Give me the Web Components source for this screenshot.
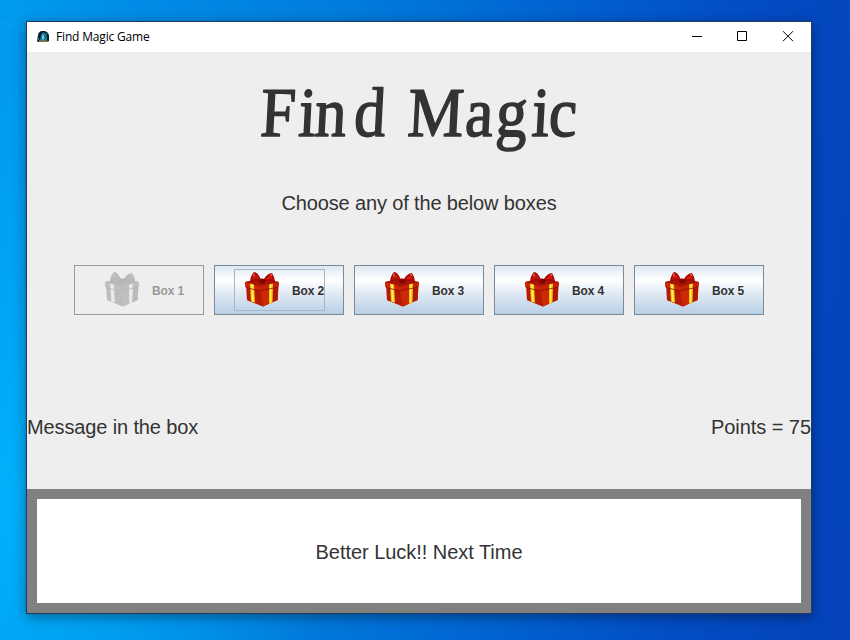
<!DOCTYPE html>
<html lang="en">
<head>
<meta charset="utf-8">
<title>Find Magic Game</title>
<style>
html,body{margin:0;width:850px;height:640px;overflow:hidden}
body{font-family:"Liberation Sans",Arial,sans-serif;color:#333}
</style>
</head>
<body>
<game-desktop>
  <game-window caption="Find Magic Game">
    <game-heading></game-heading>
    <game-label style="--gap:25px;--ls:-.14px">Choose any of the below boxes</game-label>
    <box-row>
      <gift-button disabled>Box 1</gift-button>
      <gift-button focused>Box 2</gift-button>
      <gift-button>Box 3</gift-button>
      <gift-button>Box 4</gift-button>
      <gift-button>Box 5</gift-button>
    </box-row>
    <status-row>
      <game-label style="--ls:-.13px">Message in the box</game-label>
      <game-label style="--ls:-.06px">Points = 75</game-label>
    </status-row>
    <message-panel><game-label style="--ls:-.04px">Better Luck!! Next Time</game-label></message-panel>
  </game-window>
</game-desktop>
<script>
const define = (name, html, setup) => customElements.define(name, class extends HTMLElement {
  constructor() {
    super();
    const t = document.createElement('template');
    t.innerHTML = html;
    this.attachShadow({mode: 'open'}).append(t.content.cloneNode(true));
  }
  connectedCallback() { if (setup) setup(this, this.shadowRoot); }
});

define('game-desktop', `<style>
:host{display:block;box-sizing:border-box;width:850px;height:640px;padding:21px 38px 26px 26px;
background:
 linear-gradient(8deg,transparent 49%,#35c0ff55 50%,transparent 54%) 0 468px/30px 9px no-repeat,
 linear-gradient(-160deg,#0000 47%,#35b6ff55 50%,#0000 53%) 0 20px/28px 14px no-repeat,
 radial-gradient(ellipse 330px 420px at 0 500px,#00b8ffcc,#00b0ff00),
 linear-gradient(96deg,#009cf0 0,#008de8 14%,#007cdd 38%,#0064d2 60%,#034dc5 80%,#0442ba 100%)}
</style><slot></slot>`);

define('game-window', `<style>
:host{display:flex;flex-direction:column;box-sizing:border-box;width:786px;height:593px;border:1px solid #203b5b;background:#eee;box-shadow:0 3px 12px #0006}
header{display:flex;align-items:center;height:30px;flex:none;background:#fff;color:#000;font:12px "Open Sans","Noto Sans",sans-serif}
.icon{margin:0 6px 1px 10px;flex:none}
span{flex:1;letter-spacing:-.17px;padding-bottom:1px}
.controls{flex:none}
</style>
<header>
<svg class="icon" width="13" height="13" viewBox="0 0 13 13">
<path d="M0 11.500 1 5Q2 1 5 1h3q3 1 4 4l0 6-2 1H2Z" fill="#071e2d"/>
<path d="M3 10 4 5l2-3 2 1 2 4v3Z" fill="#157a92"/>
<path d="m5 9 0-3 1-2 1 2v4Z" fill="#5fd0d4"/>
<path d="M2 10.500h8l1 1H2Z" fill="#d5bd83"/><path d="M1 8h1v2H1zM9 3h1v2H9z" fill="#397889"/>
</svg>
<span></span>
<svg class="controls" width="137" height="30" viewBox="0 0 137 30" fill="none" stroke="#000">
<path d="M18 14.5H28M63.5 9.5h9v9h-9ZM109 9.2 119 19.2M119 9.2 109 19.2"/></svg>
</header><slot></slot>`, (el, r) => { r.querySelector('span').textContent = el.getAttribute('caption'); });

define('game-heading', `<style>
:host{display:block;height:112px;flex:none}
svg{display:block}
text{font:70px "Liberation Serif",serif;fill:#333;stroke:#333;stroke-width:1.500px;stroke-linejoin:round}
</style>
<svg width="784" height="112" viewBox="27 52 784 112"><text transform="translate(7.1 0) skewX(-3) scale(.9 1)" y="136" x="288.5 331 349 392.500 430 452 516 550 590 609">Find Magic</text></svg>`);

define('game-label', `<style>
:host{display:block;font-size:20px;line-height:28px;text-align:center;letter-spacing:var(--ls,0);margin-top:var(--gap,0);white-space:nowrap;flex:none}
</style><slot></slot>`);

define('box-row', `<style>:host{display:flex;justify-content:center;gap:10px;margin-top:48px;flex:none}</style><slot></slot>`);

define('gift-button', `<style>
:host{display:flex;box-sizing:border-box;width:130px;height:50px;border:1px solid #7a8a99;background:linear-gradient(#dde8f3 0,#fff 30%,#dfe9f3 58%,#b8cfe5 100%);align-items:center;padding-left:19px}
div{display:flex;box-sizing:border-box;width:91px;height:42px;border:1px solid transparent;align-items:center;padding-left:10px;font-size:12px;font-weight:bold;letter-spacing:-.15px;white-space:nowrap}
span{padding-top:2px}
svg{flex:none;margin:0 12px 1px 0}
:host([focused]) div{border-color:#a3b8cc}
:host([disabled]){border-color:#999;background:#eee;color:#999}
:host([disabled]) svg{filter:grayscale(1) opacity(.28)}
</style>
<div><svg width="35" height="35" viewBox="0 0 35 35">
<path d="M0 10 16 7 34 10 33.500 16 32.500 28 18 34.500 2 28 1.500 16 .5 15Z" fill="#c42104"/>
<path d="M15 19 33 15 32.500 28 18 34.500Z" fill="#cd2806"/>
<path d="M24 17 33 15 32.500 28 24 31.500Z" fill="#ad1a03"/>
<path d="M1.500 15 15 19 18 34.500 2 28Z" fill="#b51b04"/>
<path d="M0 10 16 6.500 34 10 15 14.500Z" fill="#a51605"/>
<path d="M0 10 15 14.500V18.500L.5 15Z" fill="#cb2707"/>
<path d="M15 14.500 34 10 33.500 14.500 15 18.500Z" fill="#c42207"/>
<path d="m5 11.500 4 1.300 1 18L6 29.500ZM24 12.500l4-1-.5 19-3.500 1.500Z" fill="#f8c510"/>
<path d="m6 12 2 .6 1 17.500-2-1ZM25 12.300l1.500-.4-.3 18.500-1.300.5Z" fill="#fff04a"/>
<path d="M16 9C15 4 12 0 9 0Q6 3 5 9l2 1c3-2 6-2 9-1Z" fill="#a80602"/>
<path d="M18 9C20 4 24 1 27 1q2 3 3 8l-2 2c-3-3-6-3-10-2Z" fill="#a80602"/>
<path d="M7 8Q8 3 9 1q3 2 5 6c-3-1-5 0-7 1Z" fill="#c71a10"/><path d="M20 8q3-4 6-5l2 5c-3-1.500-5-1-8 0Z" fill="#cf1a10"/>
<path d="m8 3 1.500-2L9 5Zm17-1 1.500 0 1 3Z" fill="#ff8071"/>
<path d="m14 8 3-1.500 4 1-1 3.500-3 1-3-2Z" fill="#850402"/>
<path d="M1 15.500 15 19 33 15" fill="none" stroke="#861104" stroke-width=".8"/>
</svg><span><slot></slot></span></div>`);

define('status-row', `<style>:host{display:flex;justify-content:space-between;height:76px;margin-top:98px;flex:none}</style><slot></slot>`);
define('message-panel', `<style>:host{display:flex;align-items:center;justify-content:center;box-sizing:border-box;height:124px;border:10px solid gray;background:#fff;flex:none;padding-top:2px}</style><slot></slot>`);
</script>
</body>
</html>
